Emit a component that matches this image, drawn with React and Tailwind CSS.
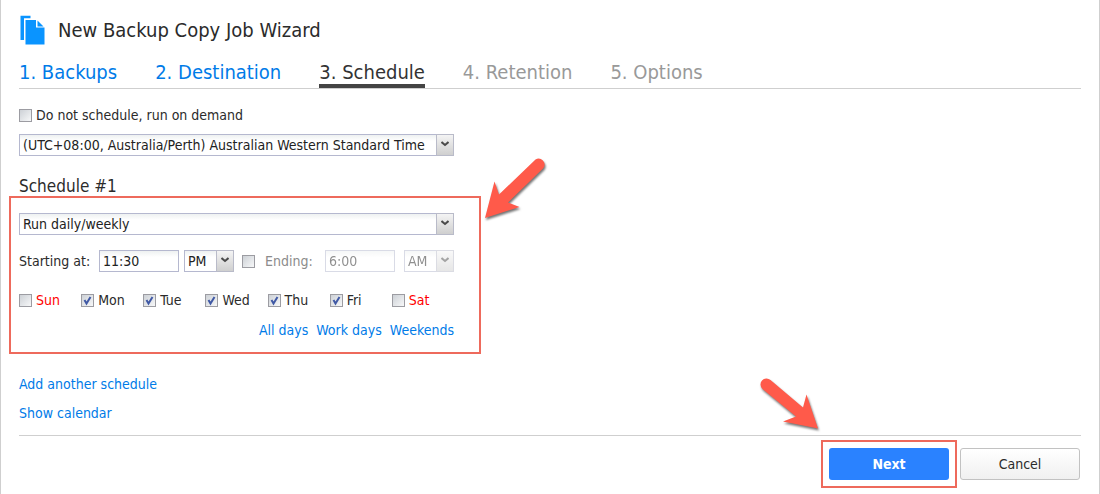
import { useState } from 'react';

const STEPS = [
  { label: '1. Backups', state: 'done' },
  { label: '2. Destination', state: 'done' },
  { label: '3. Schedule', state: 'active' },
  { label: '4. Retention', state: 'next' },
  { label: '5. Options', state: 'next' },
];

const DAYS = ['Sun', 'Mon', 'Tue', 'Wed', 'Thu', 'Fri', 'Sat'];
const WORK_DAYS = ['Mon', 'Tue', 'Wed', 'Thu', 'Fri'];
const WEEKENDS = ['Sun', 'Sat'];

function CopyIcon() {
  return (
    <svg className="h-[30px] w-[26px]" viewBox="0 0 26 30" fill="#0a94ff" aria-hidden="true">
      <path d="M1.500 0.700h10v2.600H5v21.700H1.500z" />
      <path d="M6.500 5h10.500v7.500h8.500V29.500H6.500z" />
      <path d="M18.500 5.500l6 6h-6z" />
    </svg>
  );
}

function Checkbox(props) {
  return (
    <span className="relative block size-[13px] shrink-0">
      <input
        type="checkbox"
        className="peer block size-[13px] appearance-none border border-[#9c9ca2] bg-linear-to-br from-[#cdd1d6] to-[#f7f8f9]"
        {...props}
      />
      <svg
        className="pointer-events-none absolute inset-0 hidden size-[13px] peer-checked:block"
        viewBox="0 0 13 13"
        fill="none"
        stroke="#4059a5"
        strokeWidth="2"
      >
        <path d="M3.500 6l2 3.500L9.500 3" />
      </svg>
    </span>
  );
}

function Select({ options, width, disabled, label, id }) {
  return (
    <div className={`relative h-[22px] ${width} ${disabled ? 'opacity-50' : ''}`}>
      <select
        id={id}
        aria-label={label}
        disabled={disabled}
        className="block h-full w-full appearance-none border border-[#b5b8cf] bg-white bg-linear-to-b from-[#eef1f1] to-white to-30% pr-4 pl-[3px] text-[#222] opacity-100"
      >
        {options.map((o) => (
          <option key={o}>{o}</option>
        ))}
      </select>
      <span className="pointer-events-none absolute inset-y-0 right-0 flex w-[18px] items-center justify-center border border-[#b9bbc9] bg-linear-to-b from-[#f4f4f4] to-[#cfcfcf]">
        <svg className="mb-0.5 h-[6px] w-[8px]" viewBox="0 0 8 6" fill="none" stroke="#4a4a4a" strokeWidth="2">
          <path d="M0.500 1L4 4l3.500-3" />
        </svg>
      </span>
    </div>
  );
}

function TimeInput({ id, width, ...props }) {
  return (
    <input
      id={id}
      type="text"
      className={`h-[22px] border border-[#b5b8cf] bg-white bg-linear-to-b from-[#eef1f1] to-white to-30% px-[3px] text-[#222] disabled:opacity-50 ${width}`}
      {...props}
    />
  );
}

function Arrow({ className, viewBox, d }) {
  return (
    <svg
      className={`pointer-events-none absolute drop-shadow-[1px_2px_1px_rgba(0,0,0,0.55)] ${className}`}
      viewBox={viewBox}
      fill="#ff5a4a"
      aria-hidden="true"
    >
      <path d={d} />
    </svg>
  );
}

function App() {
  const [days, setDays] = useState(WORK_DAYS);

  const toggleDay = (day) =>
    setDays(days.includes(day) ? days.filter((d) => d !== day) : [...days, day]);

  return (
    <div className="min-h-screen border-x border-[#cfcfcf] bg-white px-[18px] pt-3 font-['DejaVu_Sans_Condensed','DejaVu_Sans',sans-serif] text-[14px] leading-[18px] text-[#2b2b2b]">
      <header className="flex h-9 items-center gap-[13px]">
        <CopyIcon />
        <h1 className="text-[20px] leading-6">New Backup Copy Job Wizard</h1>
      </header>

      <nav className="mt-3 flex h-[29px] gap-[38px] border-b border-[#cfcfcf] text-[20px] leading-6">
        {STEPS.map((step) => (
          <a
            key={step.label}
            href="#"
            className={
              step.state === 'active'
                ? 'h-7 border-b-4 border-[#444] text-[#333]'
                : step.state === 'done'
                  ? 'text-[#007be8]'
                  : 'text-[#999]'
            }
          >
            {step.label}
          </a>
        ))}
      </nav>

      <main>
        <label className="mt-[17px] flex w-fit items-center gap-1">
          <Checkbox />
          Do not schedule, run on demand
        </label>
        <div className="mt-[10px]">
          <Select
            label="Time zone"
            width="w-[435px]"
            options={['(UTC+08:00, Australia/Perth) Australian Western Standard Time']}
          />
        </div>

        <h2 className="mt-[21px] text-[17px] leading-[19px]">Schedule #1</h2>

        <section className="relative -ml-[10px] h-[158px] w-[472px] border-2 border-[#ee6a5c] px-2 pt-[15px]">
          <Select label="Frequency" width="w-[435px]" options={['Run daily/weekly']} />

          <div className="mt-[15px] flex w-[435px] items-center">
            <label htmlFor="start" className="w-20 whitespace-nowrap">Starting at:</label>
            <TimeInput id="start" width="w-20" defaultValue="11:30" />
            <div className="ml-[5px]">
              <Select label="Start period" width="w-[50px]" options={['PM', 'AM']} />
            </div>
            <div className="ml-2">
              <Checkbox id="use-end" aria-label="Set ending time" />
            </div>
            <label htmlFor="end" className="ml-[10px] flex-1 whitespace-nowrap text-[#8c8c8c]">Ending:</label>
            <TimeInput id="end" width="w-[70px]" defaultValue="6:00" disabled />
            <div className="ml-[9px]">
              <Select label="End period" width="w-[50px]" options={['AM', 'PM']} disabled />
            </div>
          </div>

          <div className="mt-[19px] grid w-[435px] grid-cols-7">
            {DAYS.map((day) => (
              <label
                key={day}
                className={`flex items-center gap-1 ${WEEKENDS.includes(day) ? 'text-[#ff0000]' : ''}`}
              >
                <Checkbox checked={days.includes(day)} onChange={() => toggleDay(day)} />
                {day}
              </label>
            ))}
          </div>

          <div className="mt-3 flex w-[435px] justify-end gap-2 text-[#007be8]">
            <button type="button" onClick={() => setDays(DAYS)}>All days</button>
            <button type="button" onClick={() => setDays(WORK_DAYS)}>Work days</button>
            <button type="button" onClick={() => setDays(WEEKENDS)}>Weekends</button>
          </div>

          <Arrow
            className="-top-[46px] left-[467px] h-[76px] w-[76px]"
            viewBox="478 152 76 76"
            d="M485 218L494.500 181.500L499 194.500L535.500 159.500A6 6 0 0 1 543.500 168L508 202.500L519.500 207Z"
          />
        </section>

        <div className="mt-[21px] flex flex-col items-start gap-[11px] text-[#007be8]">
          <a href="#">Add another schedule</a>
          <a href="#">Show calendar</a>
        </div>
      </main>

      <footer className="mt-[13px] flex items-center justify-end gap-[3px] border-t border-[#cfcfcf] pt-1 pr-px">
        <div className="relative border-2 border-[#ee6a5c] p-[6px]">
          <button type="button" className="block h-8 w-[120px] rounded-[3px] bg-[#2a82ff] font-bold text-white">
            Next
          </button>
          <Arrow
            className="-top-[72px] -left-[71px] h-[70px] w-[76px]"
            viewBox="752 370 76 70"
            d="M818 428.500L806.500 394.500L803 407.500L770.500 380A6 6 0 0 0 762.500 389L796 416.500L783 421.500Z"
          />
        </div>
        <button
          type="button"
          className="h-8 w-[120px] rounded-[3px] border border-[#c2c2c2] bg-linear-to-b from-white to-[#f0f0f0]"
        >
          Cancel
        </button>
      </footer>
    </div>
  );
}

export default App;
